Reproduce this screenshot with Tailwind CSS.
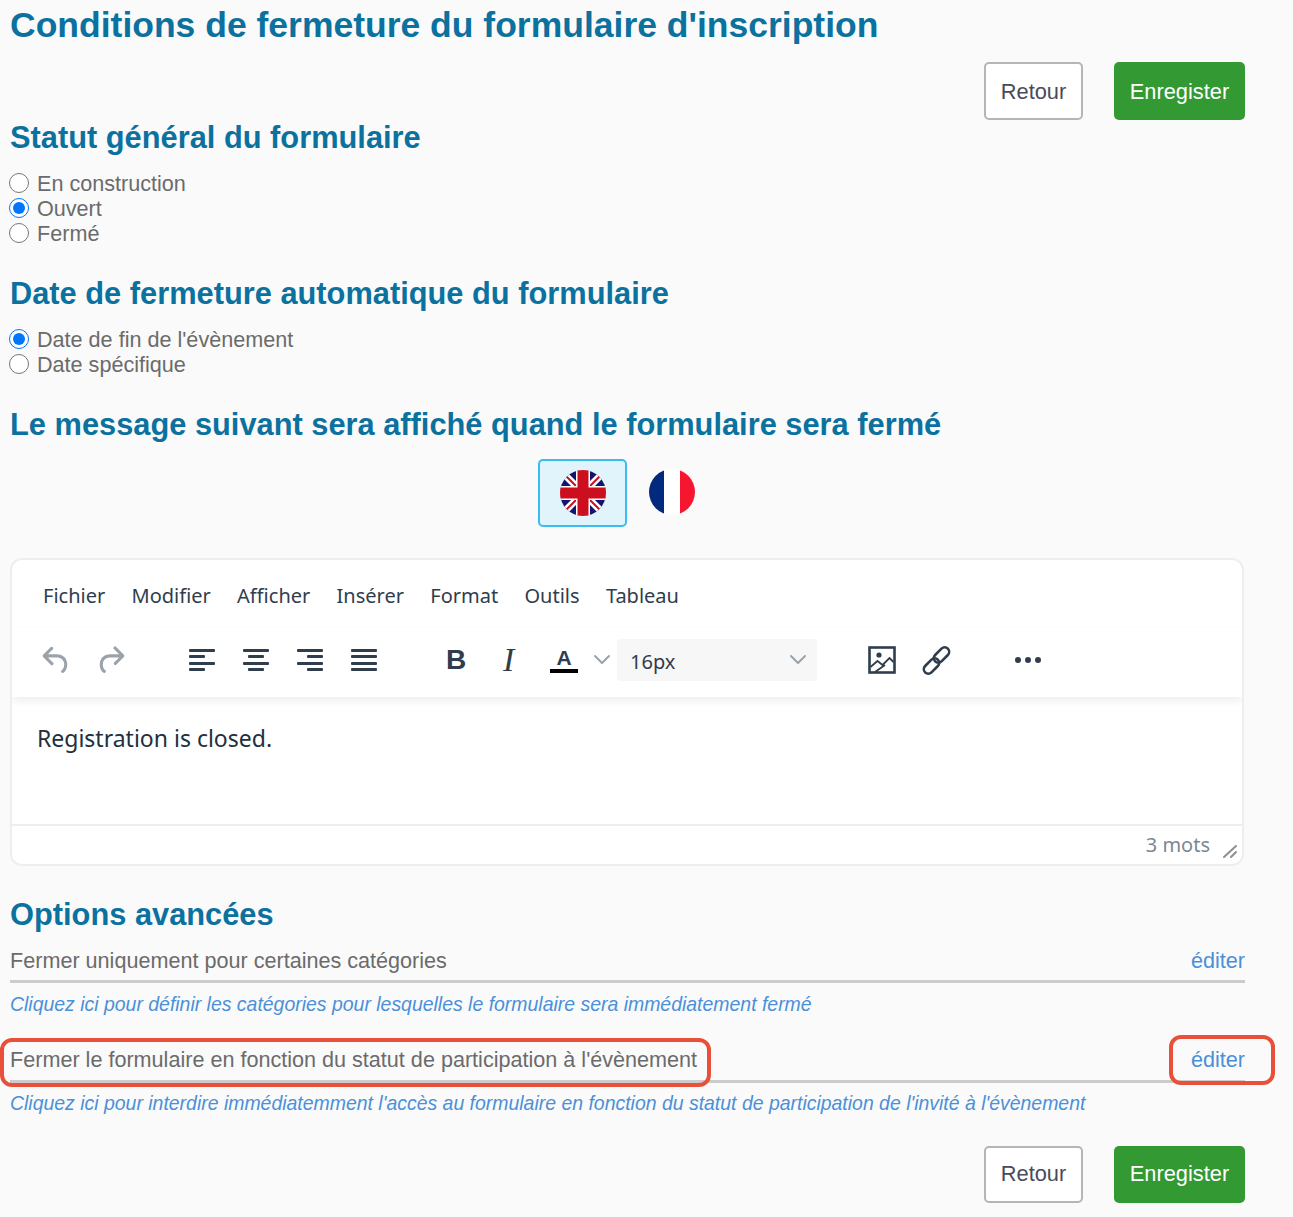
<!DOCTYPE html>
<html lang="fr">
<head>
    <meta charset="UTF-8">
    <script src="https://cdn.jsdelivr.net/npm/@tailwindcss/browser@4"></script>
    <title>Conditions de fermeture</title>
</head>

<body class="bg-[#fafafa] font-['Liberation_Sans',Arial,sans-serif]">
    <div class="relative h-[1217px] overflow-hidden pl-[10px] pr-[48px]">
        <!--Titre-->
        <h1 class="h-[50px] text-[35.5px] leading-[50px] font-bold text-[#0b719f]">Conditions de fermeture du formulaire d'inscription</h1>

        <!--Boutons haut-->
        <div class="float-right mt-[12px] flex gap-[31px]">
            <button class="h-[58px] w-[99px] rounded-[5px] border-2 border-[#b5b5b5] bg-white pt-[2px] text-[21.8px] text-[#4a4a5a]">Retour</button>
            <button class="h-[58px] w-[131px] rounded-[5px] bg-[#339933] pt-[2px] text-[21.8px] text-white">Enregister</button>
        </div>

        <!--Statut-->
        <h2 class="mt-[63px] h-[50px] text-[30.8px] leading-[50px] font-bold text-[#0b719f]">Statut général du formulaire</h2>
        <div class="mt-[8px] text-[21.6px] leading-[25px] text-[#6b6b6b]">
            <label class="flex h-[25px] items-center gap-[7px]"><input type="radio" name="statut" class="m-0 h-5 w-5 -translate-x-px -translate-y-px accent-[#0075ff]">En construction</label>
            <label class="flex h-[25px] items-center gap-[7px]"><input type="radio" name="statut" checked class="m-0 h-5 w-5 -translate-x-px -translate-y-px accent-[#0075ff]">Ouvert</label>
            <label class="flex h-[25px] items-center gap-[7px]"><input type="radio" name="statut" class="m-0 h-5 w-5 -translate-x-px -translate-y-px accent-[#0075ff]">Fermé</label>
        </div>

        <!--Date-->
        <h2 class="mt-[23px] h-[50px] text-[30.8px] leading-[50px] font-bold text-[#0b719f]">Date de fermeture automatique du formulaire</h2>
        <div class="mt-[8px] text-[21.6px] leading-[25px] text-[#6b6b6b]">
            <label class="flex h-[25px] items-center gap-[7px]"><input type="radio" name="date" checked class="m-0 h-5 w-5 -translate-x-px -translate-y-px accent-[#0075ff]">Date de fin de l'évènement</label>
            <label class="flex h-[25px] items-center gap-[7px]"><input type="radio" name="date" class="m-0 h-5 w-5 -translate-x-px -translate-y-px accent-[#0075ff]">Date spécifique</label>
        </div>

        <!--Message-->
        <h2 class="mt-[23px] h-[50px] text-[30.8px] leading-[50px] font-bold text-[#0b719f]">Le message suivant sera affiché quand le formulaire sera fermé</h2>

        <!--Drapeaux-->
        <div class="mt-[9px] flex h-[68px] pl-[528px]">
            <div class="flex h-[68px] w-[89px] items-center justify-center rounded-[5px] border-2 border-[#38bdf0] bg-[#e1f4fb]">
                <svg width="46" height="46" viewBox="0 0 46 46">
                    <defs><clipPath id="cercle-uk"><circle cx="23" cy="23" r="23"/></clipPath></defs>
                    <g clip-path="url(#cercle-uk)">
                        <rect width="46" height="46" fill="#14146e"/>
                        <path d="M0 0L46 46M46 0L0 46" stroke="#fff" stroke-width="7"/>
                        <path d="M0 0L46 46M46 0L0 46" stroke="#cc0f1e" stroke-width="2"/>
                        <path d="M23 0V46M0 23H46" stroke="#fff" stroke-width="14"/>
                        <path d="M23 0V46M0 23H46" stroke="#cc0f1e" stroke-width="11"/>
                    </g>
                </svg>
            </div>
            <svg class="mt-[10px] ml-[22px]" width="46" height="46" viewBox="0 0 46 46">
                <defs><clipPath id="cercle-fr"><circle cx="23" cy="23" r="23"/></clipPath></defs>
                <g clip-path="url(#cercle-fr)">
                    <rect width="15" height="46" fill="#012a7f"/>
                    <rect x="15" width="16" height="46" fill="#fff"/>
                    <rect x="31" width="15" height="46" fill="#f7162f"/>
                </g>
            </svg>
        </div>

        <!--Editeur-->
        <div class="mt-[31px] h-[308px] w-[1234px] overflow-hidden rounded-[12px] border-2 border-[#eeeeee] bg-white font-['Noto_Sans',sans-serif]">
            <!--Menu-->
            <div class="flex h-[68px] items-center gap-[26.3px] pt-[4px] pl-[31px] text-[20px] text-[#2f3d4d]">
                <span>Fichier</span><span>Modifier</span><span>Afficher</span><span>Insérer</span><span>Format</span><span>Outils</span><span>Tableau</span>
            </div>
            <!--Barre d'outils-->
            <div class="relative z-10 flex h-[69px] items-center pb-[5px] shadow-[0_4px_8px_rgba(0,0,0,0.07)]">
                <svg class="ml-[26px] text-[#9aa3ab]" width="37" height="37" viewBox="0 0 24 24" fill="currentColor"><path d="M6.4 8H12c3.7 0 6.2 2 6.8 5.1.6 2.7-.4 5.6-2.3 6.8a1 1 0 0 1-1-1.8c1.1-.6 1.8-2.7 1.4-4.6-.5-2.1-2.1-3.5-4.9-3.5H6.4l3.3 3.3a1 1 0 1 1-1.4 1.4l-5-5a1 1 0 0 1 0-1.4l5-5a1 1 0 0 1 1.4 1.4L6.4 8Z"/></svg>
                <svg class="ml-[17px] text-[#9aa3ab]" width="37" height="37" viewBox="0 0 24 24" fill="currentColor"><path d="M17.6 10H12c-2.8 0-4.4 1.4-4.9 3.5-.4 2 .3 4 1.4 4.6a1 1 0 1 1-1 1.8c-2-1.2-2.9-4.1-2.3-6.8.6-3 3-5.1 6.8-5.1h5.6l-3.3-3.3a1 1 0 1 1 1.4-1.4l5 5a1 1 0 0 1 0 1.4l-5 5a1 1 0 0 1-1.4-1.4l3.3-3.3Z"/></svg>
                <!--Alignement-->
                <svg class="ml-[60px] text-[#2f3d4d]" width="27" height="24" viewBox="0 0 27 24" fill="currentColor"><rect y="1" width="26" height="3" rx="1"/><rect y="7" width="16" height="3" rx="1"/><rect y="14" width="26" height="3" rx="1"/><rect y="20" width="16" height="3" rx="1"/></svg>
                <svg class="ml-[27px] text-[#2f3d4d]" width="27" height="24" viewBox="0 0 27 24" fill="currentColor"><rect y="1" width="26" height="3" rx="1"/><rect x="5" y="7" width="16" height="3" rx="1"/><rect y="14" width="26" height="3" rx="1"/><rect x="5" y="20" width="16" height="3" rx="1"/></svg>
                <svg class="ml-[27px] text-[#2f3d4d]" width="27" height="24" viewBox="0 0 27 24" fill="currentColor"><rect y="1" width="26" height="3" rx="1"/><rect x="10" y="7" width="16" height="3" rx="1"/><rect y="14" width="26" height="3" rx="1"/><rect x="10" y="20" width="16" height="3" rx="1"/></svg>
                <svg class="ml-[27px] text-[#2f3d4d]" width="27" height="24" viewBox="0 0 27 24" fill="currentColor"><rect y="1" width="26" height="3" rx="1"/><rect y="7" width="26" height="3" rx="1"/><rect y="14" width="26" height="3" rx="1"/><rect y="20" width="26" height="3" rx="1"/></svg>
                <!--Texte-->
                <span class="ml-[68px] w-[21px] font-['Liberation_Sans',sans-serif] text-[28px] leading-none font-bold text-[#2f3d4d]">B</span>
                <span class="ml-[36px] w-[14px] font-['Liberation_Serif',serif] text-[34px] leading-none text-[#2f3d4d] italic">I</span>
                <div class="ml-[33px] flex w-[28px] flex-col items-center">
                    <span class="font-['Liberation_Sans',sans-serif] text-[21px] leading-[22px] font-bold text-[#2f3d4d]">A</span>
                    <div class="h-[4px] w-[28px] bg-black"></div>
                </div>
                <svg class="ml-[15px] text-[#9aa3ab]" width="18" height="18" viewBox="0 0 18 18" fill="none" stroke="currentColor" stroke-width="2" stroke-linecap="round" stroke-linejoin="round"><path d="M2 5l7 7 7-7"/></svg>
                <div class="ml-[6px] flex h-[42px] w-[200px] items-center justify-between rounded-[4px] bg-[#f7f7f7] pr-[10px] pl-[13px] text-[20px] text-[#2f3d4d]">
                    <span class="pt-[3px]">16px</span>
                    <svg class="text-[#9aa3ab]" width="18" height="18" viewBox="0 0 18 18" fill="none" stroke="currentColor" stroke-width="2" stroke-linecap="round" stroke-linejoin="round"><path d="M2 5l7 7 7-7"/></svg>
                </div>
                <!--Image-->
                <svg class="ml-[51px] text-[#2f3d4d]" width="29" height="29" viewBox="0 0 29 29" fill="none" stroke="currentColor"><rect x="1.5" y="1.5" width="25" height="25" stroke-width="2.6"/><circle cx="11" cy="9" r="2.6" fill="currentColor" stroke="none"/><path d="M2.5 21l7-6 5 4 7-7 4 4M7 26l10-7" stroke-width="1.8"/></svg>
                <!--Lien-->
                <svg class="ml-[25px] text-[#2f3d4d]" width="29" height="29" viewBox="0 0 29 29" fill="none" stroke="currentColor" stroke-width="2.6"><rect x="15" y="0" width="9" height="18" rx="4.5" transform="rotate(45 19.5 9)"/><rect x="5" y="11" width="9" height="18" rx="4.5" transform="rotate(45 9.5 20)"/></svg>
                <!--Plus-->
                <svg class="ml-[63px] text-[#2f3d4d]" width="28" height="8" viewBox="0 0 28 8" fill="currentColor"><circle cx="4" cy="4" r="3"/><circle cx="14" cy="4" r="3"/><circle cx="24" cy="4" r="3"/></svg>
            </div>
            <!--Contenu-->
            <div class="h-[129px] border-b-2 border-[#eeeeee] pt-[23px] pl-[25px] text-[23px] leading-[36px] text-[#222f3e]">Registration is closed.</div>
            <!--Statut-->
            <div class="flex h-[38px] items-center justify-end pr-[32px] text-[20px] text-[#7d8791]">
                <span>3 mots</span>
            </div>
        </div>

        <!--Options avancees-->
        <h2 class="mt-[24px] h-[50px] text-[30.8px] leading-[50px] font-bold text-[#0b719f]">Options avancées</h2>
        <div class="mt-[1px] flex h-[42px] items-center justify-between border-b-[3px] border-[#cccccc] pt-[2px] text-[21.6px] text-[#6b6b6b]">
            <span>Fermer uniquement pour certaines catégories</span>
            <a class="text-[#4a90d9]">éditer</a>
        </div>
        <p class="mt-[9px] h-[25px] text-[19.45px] leading-[25px] text-[#4a90d9] italic">Cliquez ici pour définir les catégories pour lesquelles le formulaire sera immédiatement fermé</p>
        <div class="mt-[23px] flex h-[43px] items-center justify-between border-b-[3px] border-[#cccccc] text-[21.6px] text-[#6b6b6b]">
            <span>Fermer le formulaire en fonction du statut de participation à l'évènement</span>
            <a class="text-[#4a90d9]">éditer</a>
        </div>
        <p class="mt-[8px] h-[25px] text-[19.45px] leading-[25px] text-[#4a90d9] italic">Cliquez ici pour interdire immédiatemment l'accès au formulaire en fonction du statut de participation de l'invité à l'évènement</p>

        <!--Boutons bas-->
        <div class="mt-[30px] flex justify-end gap-[31px]">
            <button class="h-[57px] w-[99px] rounded-[5px] border-2 border-[#b5b5b5] bg-white text-[21.8px] text-[#4a4a5a]">Retour</button>
            <button class="h-[57px] w-[131px] rounded-[5px] bg-[#339933] text-[21.8px] text-white">Enregister</button>
        </div>

        <!--Annotations rouges-->
        <div class="absolute top-[1038px] left-0 h-[49px] w-[711px] rounded-[12px] border-[4px] border-[#e8503a]"></div>
        <div class="absolute top-[1035px] left-[1169px] h-[50px] w-[106px] rounded-[12px] border-[4px] border-[#e8503a]"></div>
        <svg class="absolute top-[843px] left-[1222px] text-[#8a8f94]" width="16" height="16" viewBox="0 0 16 16" stroke="currentColor" stroke-width="2" stroke-linecap="round"><path d="M2 14L14 3M9 14L14 9"/></svg>
    </div>
</body>
</html>
